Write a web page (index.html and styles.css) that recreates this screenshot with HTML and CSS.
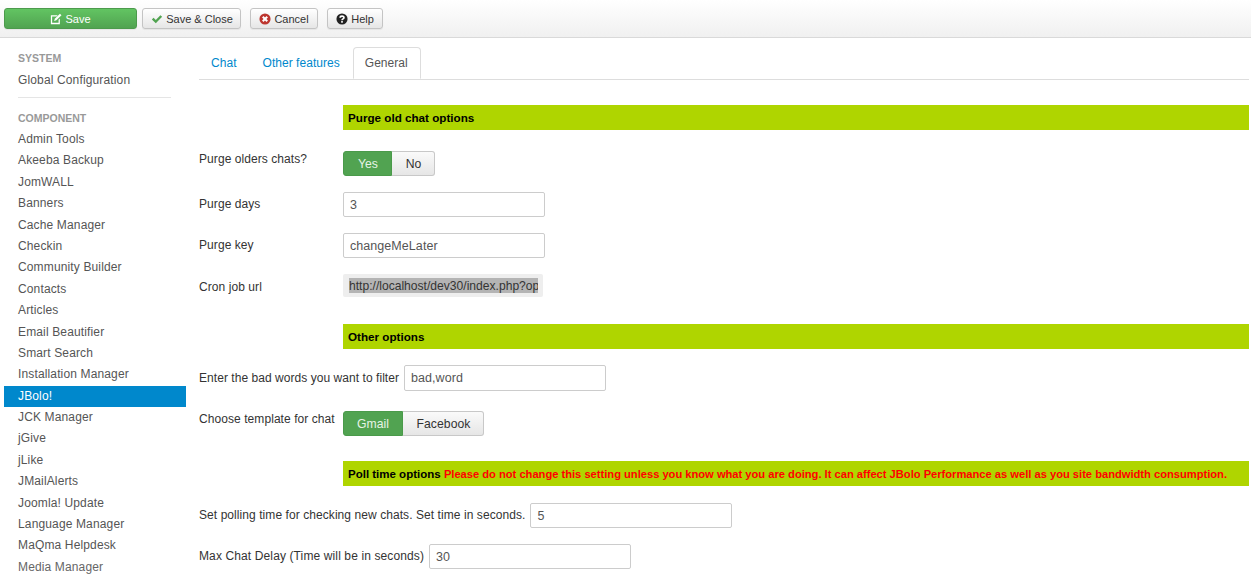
FILE: index.html
```html
<!DOCTYPE html>
<html lang="en">
<head>
<meta charset="utf-8">
<title>JBolo! Configuration</title>
<link rel="stylesheet" href="styles.css">
</head>
<body>
<header class="toolbar">
  <button class="btn btn-save">
    <svg class="ico" viewBox="0 0 14 14"><path fill="#fff" d="M1 2.500h8L7.600 4H2.500v7.500H10V8l1.500-1.500V13H1z"/><path fill="#fff" d="M11.600.800l1.800 1.800-6 6-2.600.800.800-2.600z"/></svg>
    Save</button>
  <button class="btn btn-close">
    <svg class="ico" viewBox="0 0 14 14"><path fill="#51a351" d="M1 7.500l2-2 2.600 2.600L11 2.500l2 2-7.400 7.600z"/></svg>
    Save &amp; Close</button>
  <button class="btn btn-cancel">
    <svg class="ico" viewBox="0 0 14 14"><circle cx="7" cy="7" r="6.500" fill="#bd362f"/><path stroke="#fff" stroke-width="2.400" d="M4.400 4.400l5.200 5.200M9.600 4.400l-5.200 5.200"/></svg>
    Cancel</button>
  <button class="btn btn-help">
    <svg class="ico" viewBox="0 0 14 14"><circle cx="7" cy="7" r="6.500" fill="#222"/><path fill="none" stroke="#fff" stroke-width="1.900" d="M4.800 5.500C4.800 3 9.300 3 9.300 5.400 9.300 6.900 7 6.900 7 8.500"/><rect x="6" y="9.400" width="2" height="1.900" fill="#fff"/></svg>
    Help</button>
</header>
<div class="layout">
  <nav class="sidebar">
    <div class="nav-head nav-head-first">SYSTEM</div>
    <a class="nav-item">Global Configuration</a>
    <hr class="nav-divider">
    <div class="nav-head">COMPONENT</div>
    <div class="nav-list">
      <a class="nav-item">Admin Tools</a>
      <a class="nav-item">Akeeba Backup</a>
      <a class="nav-item">JomWALL</a>
      <a class="nav-item">Banners</a>
      <a class="nav-item">Cache Manager</a>
      <a class="nav-item">Checkin</a>
      <a class="nav-item">Community Builder</a>
      <a class="nav-item">Contacts</a>
      <a class="nav-item">Articles</a>
      <a class="nav-item">Email Beautifier</a>
      <a class="nav-item">Smart Search</a>
      <a class="nav-item">Installation Manager</a>
      <a class="nav-item nav-active">JBolo!</a>
      <a class="nav-item">JCK Manager</a>
      <a class="nav-item">jGive</a>
      <a class="nav-item">jLike</a>
      <a class="nav-item">JMailAlerts</a>
      <a class="nav-item">Joomla! Update</a>
      <a class="nav-item">Language Manager</a>
      <a class="nav-item">MaQma Helpdesk</a>
      <a class="nav-item nav-last">Media Manager</a>
    </div>
  </nav>
  <main class="content">
    <div class="tabs">
      <a class="tab tab-first">Chat</a>
      <a class="tab">Other features</a>
      <a class="tab tab-active">General</a>
    </div>
    <section class="bar bar-first"><b>Purge old chat options</b></section>
    <div class="row row-toggle">
      <label class="label">Purge olders chats?</label>
      <div class="toggle"><span class="seg seg-on seg-yes">Yes</span><span class="seg seg-no">No</span></div>
    </div>
    <div class="row"><label class="label label-mid">Purge days</label><input class="input" value="3"></div>
    <div class="row"><label class="label label-mid">Purge key</label><input class="input" value="changeMeLater"></div>
    <div class="row"><label class="label label-cron">Cron job url</label><div class="cron"><div class="cron-clip"><span class="cron-sel">http://localhost/dev30/index.php?option=com_jbolo</span></div></div></div>
    <section class="bar bar-other"><b>Other options</b></section>
    <div class="row"><label class="label-auto label-bad">Enter the bad words you want to filter</label><input class="input input-tall" value="bad,word"></div>
    <div class="row row-toggle2">
      <label class="label">Choose template for chat</label>
      <div class="toggle"><span class="seg seg-on seg-gmail">Gmail</span><span class="seg seg-fb">Facebook</span></div>
    </div>
    <section class="bar bar-poll"><b class="poll-title">Poll time options</b> <b class="warn">Please do not change this setting unless you know what you are doing. It can affect JBolo Performance as well as you site bandwidth consumption.</b></section>
    <div class="row row-poll"><label class="label-auto label-short">Set polling time for checking new chats. Set time in seconds.</label><input class="input" value="5"></div>
    <div class="row"><label class="label-auto label-short label-delay">Max Chat Delay (Time will be in seconds)</label><input class="input" value="30"></div>
  </main>
</div>
</body>
</html>
```
FILE: styles.css
```css
html, body { margin: 0; padding: 0; height: 580px; overflow: hidden; }
body { font-family: "Liberation Sans", Arial, sans-serif; font-size: 12px; color: #333; background: #fff; }

.toolbar { display: flex; height: 38px; padding: 8px 4px 0; box-sizing: border-box; border-bottom: 1px solid #d9d9d9; background: linear-gradient(#fff, #f0f0f0); align-items: flex-start; }
.btn { display: flex; align-items: center; justify-content: center; gap: 3px; height: 21px; padding: 0; border: 1px solid #c4c4c4; border-radius: 3px; background: linear-gradient(#fff, #e6e6e6); font: 11px "Liberation Sans", Arial, sans-serif; color: #333; box-shadow: 0 1px 1px rgba(0,0,0,.06); }
.btn-save { width: 133px; border-color: #4c9a4c; background: linear-gradient(#62c462, #51a351); color: #fff; }
.btn-close { width: 99px; margin-left: 5px; padding-left: 1px; }
.btn-cancel { width: 68px; margin-left: 9px; }
.btn-help { width: 56px; margin-left: 9px; }
.ico { width: 12px; height: 12px; flex: none; }

.layout { display: flex; }
.sidebar { width: 182px; margin-left: 4px; flex: none; font-size: 12px; letter-spacing: .14px; color: #555; }
.nav-head { padding-left: 14px; height: 13px; line-height: 13px; font-size: 10.5px; font-weight: bold; color: #999; letter-spacing: 0; }
.nav-head-first { margin-top: 14px; }
.nav-list { margin-top: 3.6px; }
.nav-item { display: block; height: 21.4px; line-height: 21.4px; padding-left: 14px; color: #555; white-space: nowrap; }
.nav-head-first + .nav-item { margin-top: 5px; }
.nav-divider { margin: 6px 15px 14px 14px; border: 0; border-top: 1px solid #e5e5e5; }
.nav-item.nav-active { background: #0088cc; color: #fff; }
.nav-item.nav-last { color: #666; }

.content { flex: 1; padding-left: 11px; min-width: 0; }
.tabs { display: flex; gap: 1px; height: 32px; margin: 9px 2px 0 2px; border-bottom: 1px solid #ddd; font-size: 12px; letter-spacing: .04px; }
.tab { padding: 0 12px; height: 31px; line-height: 33px; color: #0088cc; }
.tab-first { padding-right: 13px; }
.tab-active { height: 32px; box-sizing: border-box; padding: 0 12px 0 11px; line-height: 31px; color: #555; background: #fff; border: 1px solid #ddd; border-bottom-color: #fff; border-radius: 4px 4px 0 0; }

.bar { margin-left: 146px; margin-right: 2px; height: 25px; line-height: 26px; padding-left: 5px; background: #afd500; color: #000; font-size: 11.66px; white-space: nowrap; }
.bar-first { margin-top: 25px; }
.bar-other { margin-top: 23px; }
.bar-poll { margin-top: 25px; }
.poll-title { font-size: 11.5px; }
.warn { color: #f00; font-size: 11.15px; }

.row { display: flex; margin-top: 16px; padding-left: 2px; font-size: 12px; letter-spacing: .07px; }
.label { width: 144px; flex: none; line-height: 16px; }
.label-mid { line-height: 24px; }
.label-cron { line-height: 27px; }
.label-auto { margin-right: 5px; line-height: 25px; white-space: nowrap; }
.label-bad { letter-spacing: .05px; line-height: 26px; }
.label-short { line-height: 24px; }
.label-delay { letter-spacing: .12px; }
.row-toggle { margin-top: 21px; }
.row-toggle2 { margin-top: 20px; }
.row-poll { margin-top: 17px; }

.input { width: 202px; height: 25px; box-sizing: border-box; padding: 0 6px; border: 1px solid #ccc; border-radius: 2px; font: 12.5px "Liberation Sans", Arial, sans-serif; letter-spacing: .06px; color: #555; background: #fff; outline: 0; }
.input-tall { height: 26px; }

.toggle { display: flex; height: 25px; }
.seg { display: flex; align-items: center; justify-content: center; box-sizing: border-box; font-size: 12.2px; letter-spacing: .05px; border: 1px solid #c8c8c8; background: linear-gradient(#fafafa, #e6e6e6); color: #333; }
.seg.seg-on { background: #51a351; border-color: #4a9a4a; color: #e6f3e6; border-radius: 3px 0 0 3px; }
.seg-yes { width: 49px; padding-left: 1px; }
.seg-no { width: 43px; border-left: 0; border-radius: 0 3px 3px 0; padding-left: 1px; }
.seg-gmail { width: 60px; }
.seg-fb { width: 81px; border-left: 0; border-radius: 0 3px 3px 0; padding-left: 1px; }

.cron { width: 200px; height: 23px; box-sizing: border-box; background: #eee; border-radius: 2px; padding: 4px 6px; }
.cron-clip { width: 189px; height: 15px; overflow: hidden; white-space: nowrap; }
.cron-sel { display: block; width: max-content; background: #b4b4b4; color: #333; line-height: 16px; font-size: 12.1px; letter-spacing: 0; }
```
